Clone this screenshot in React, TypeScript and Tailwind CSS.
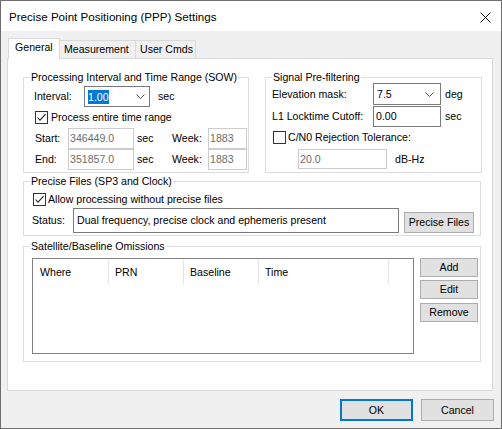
import React from "react";

function Check({ checked }: { checked: boolean }) {
  return (
    <span className="w-[13px] h-[13px] shrink-0 border border-[#333333] bg-white flex items-center justify-center">
      {checked && (
        <svg width="11" height="11" viewBox="0 0 11 11">
          <path d="M1.5 5.5 L4 8.2 L9.6 2.2" stroke="#222222" strokeWidth="1.1" fill="none" />
        </svg>
      )}
    </span>
  );
}

function Chevron() {
  return (
    <svg width="9" height="5" viewBox="0 0 9 5">
      <path d="M0.5 0.5 L4.5 4.5 L8.5 0.5" stroke="#505050" strokeWidth="1" fill="none" />
    </svg>
  );
}

function Group({
  label,
  className,
  children,
}: {
  label: string;
  className: string;
  children: React.ReactNode;
}) {
  return (
    <div className={"relative border border-[#dcdcdc] " + className}>
      <span className="absolute left-[6px] -top-[7px] bg-white px-px leading-[13px] whitespace-nowrap">
        {label}
      </span>
      {children}
    </div>
  );
}

function Btn({ className, children }: { className: string; children: React.ReactNode }) {
  return (
    <div
      className={
        "bg-[#e1e1e1] border border-[#adadad] flex items-center justify-center whitespace-nowrap " + className
      }
    >
      {children}
    </div>
  );
}

export default function App() {
  return (
    <div className="w-[502px] h-[429px] border border-[#6e6e6e] bg-[#f0f0f0] flex flex-col text-[10.6px] leading-[13px] text-black font-['Liberation_Sans',Arial,sans-serif] overflow-hidden">
      {/* Title bar */}
      <div className="h-[30px] shrink-0 bg-white flex items-center justify-between pl-[8px] pr-[10px]">
        <span className="text-[11.6px] leading-[14px] mt-[1px]">Precise Point Positioning (PPP) Settings</span>
        <svg width="11" height="11" viewBox="0 0 11 11" className="mt-[2px]">
          <path d="M0.5 0.5 L10.5 10.5 M10.5 0.5 L0.5 10.5" stroke="#111111" strokeWidth="1" fill="none" />
        </svg>
      </div>

      {/* Tabs */}
      <div className="flex items-end h-[20px] mt-[7px] ml-[7px] shrink-0">
        <div className="relative z-10 h-[21px] -mb-px w-[52px] bg-white border border-b-0 border-[#d9d9d9] pl-[6px] pt-[2px]">
          General
        </div>
        <div className="h-[18px] w-[76px] border border-l-0 border-b-0 border-[#d9d9d9] pl-[4px] pt-[2px]">
          Measurement
        </div>
        <div className="h-[18px] w-[60px] border border-l-0 border-b-0 border-[#d9d9d9] pl-[4px] pt-[2px]">
          User Cmds
        </div>
      </div>

      {/* Panel */}
      <div className="ml-[6px] w-[486px] h-[333px] shrink-0 bg-white border border-[#d9d9d9] pl-[15px] pt-[18px] flex flex-col">
        <div className="flex gap-[16px]">
          <Group label="Processing Interval and Time Range (SOW)" className="w-[226px] h-[96px] pt-[8px] pl-[10px]">
            <div className="flex items-center h-[21px]">
              <span className="w-[50px]">Interval:</span>
              <div className="w-[66px] h-[21px] border border-[#7a7a7a] bg-white flex items-center justify-between pl-[3px] pr-[4px]">
                <span className="bg-[#0078d7] text-white h-[14px] leading-[14px]">1.00</span>
                <Chevron />
              </div>
              <span className="ml-[8px]">sec</span>
            </div>
            <div className="flex items-center mt-[4px] ml-[1px] h-[13px]">
              <Check checked />
              <span className="ml-[3px]">Process entire time range</span>
            </div>
            <div className="flex items-center mt-[4px] ml-[1px] h-[21px]">
              <span className="w-[33px]">Start:</span>
              <div className="w-[66px] h-[21px] border border-[#cccccc] bg-white text-[#6d6d6d] flex items-center pl-[1px]">
                346449.0
              </div>
              <span className="ml-[3px] w-[35px]">sec</span>
              <span className="w-[36px]">Week:</span>
              <div className="w-[39px] h-[21px] border border-[#cccccc] bg-white text-[#6d6d6d] flex items-center pl-[1px]">
                1883
              </div>
            </div>
            <div className="flex items-center ml-[1px] h-[21px]">
              <span className="w-[33px]">End:</span>
              <div className="w-[66px] h-[21px] border border-[#cccccc] bg-white text-[#6d6d6d] flex items-center pl-[1px]">
                351857.0
              </div>
              <span className="ml-[3px] w-[35px]">sec</span>
              <span className="w-[36px]">Week:</span>
              <div className="w-[39px] h-[21px] border border-[#cccccc] bg-white text-[#6d6d6d] flex items-center pl-[1px]">
                1883
              </div>
            </div>
          </Group>

          <Group label="Signal Pre-filtering" className="w-[217px] h-[96px] pt-[5px] pl-[6px]">
            <div className="flex items-center h-[22px]">
              <span className="w-[101px]">Elevation mask:</span>
              <div className="w-[68px] h-[22px] border border-[#7a7a7a] bg-white flex items-center justify-between pl-[3px] pr-[6px]">
                <span>7.5</span>
                <Chevron />
              </div>
              <span className="ml-[4px]">deg</span>
            </div>
            <div className="flex items-center mt-[1px] h-[21px]">
              <span className="w-[101px]">L1 Locktime Cutoff:</span>
              <div className="w-[68px] h-[21px] border border-[#7a7a7a] bg-white flex items-center pl-[2px]">
                0.00
              </div>
              <span className="ml-[4px]">sec</span>
            </div>
            <div className="flex items-center mt-[4px] ml-[1px] h-[13px]">
              <Check checked={false} />
              <span className="ml-[2px]">C/N0 Rejection Tolerance:</span>
            </div>
            <div className="flex items-center mt-[5px] ml-[26px] h-[20px]">
              <div className="w-[89px] h-[20px] border border-[#cccccc] bg-white text-[#6d6d6d] flex items-center pl-[1px]">
                20.0
              </div>
              <span className="ml-[8px]">dB-Hz</span>
            </div>
          </Group>
        </div>

        <Group label="Precise Files (SP3 and Clock)" className="w-[458px] h-[55px] mt-[8px] pt-[11px] pl-[9px]">
          <div className="flex items-center h-[13px]">
            <Check checked />
            <span className="ml-[2px]">Allow processing without precise files</span>
          </div>
          <div className="flex items-start mt-[2px] -ml-[1px]">
            <span className="w-[41px] h-[25px] flex items-center">Status:</span>
            <div className="w-[326px] h-[25px] border border-[#7a7a7a] bg-white flex items-center pl-[3px] whitespace-nowrap">
              Dual frequency, precise clock and ephemeris present
            </div>
            <Btn className="ml-[5px] mt-[4px] w-[70px] h-[21px]">Precise Files</Btn>
          </div>
        </Group>

        <Group label="Satellite/Baseline Omissions" className="w-[458px] h-[116px] mt-[10px] pt-[11px] pl-[8px] flex items-start">
          <div className="w-[382px] h-[96px] border border-[#828282] bg-white">
            <div className="flex h-[24px] mt-[1px]">
              <div className="w-[76px] border-r border-[#e5e5e5] pl-[7px] flex items-center">Where</div>
              <div className="w-[75px] border-r border-[#e5e5e5] pl-[6px] flex items-center">PRN</div>
              <div className="w-[75px] border-r border-[#e5e5e5] pl-[6px] flex items-center">Baseline</div>
              <div className="w-[130px] border-r border-[#e5e5e5] pl-[6px] flex items-center">Time</div>
            </div>
          </div>
          <div className="ml-[6px] flex flex-col">
            <Btn className="w-[58px] h-[19px]">Add</Btn>
            <Btn className="w-[58px] h-[19px] mt-[3px]">Edit</Btn>
            <Btn className="w-[58px] h-[19px] mt-[4px]">Remove</Btn>
          </div>
        </Group>
      </div>

      {/* Bottom buttons */}
      <div className="flex justify-end gap-[8px] mt-[8px] pr-[7px] shrink-0">
        <div className="w-[73px] h-[22px] bg-[#e1e1e1] border-2 border-[#0078d7] flex items-center justify-center">
          OK
        </div>
        <Btn className="w-[73px] h-[22px]">Cancel</Btn>
      </div>
    </div>
  );
}
